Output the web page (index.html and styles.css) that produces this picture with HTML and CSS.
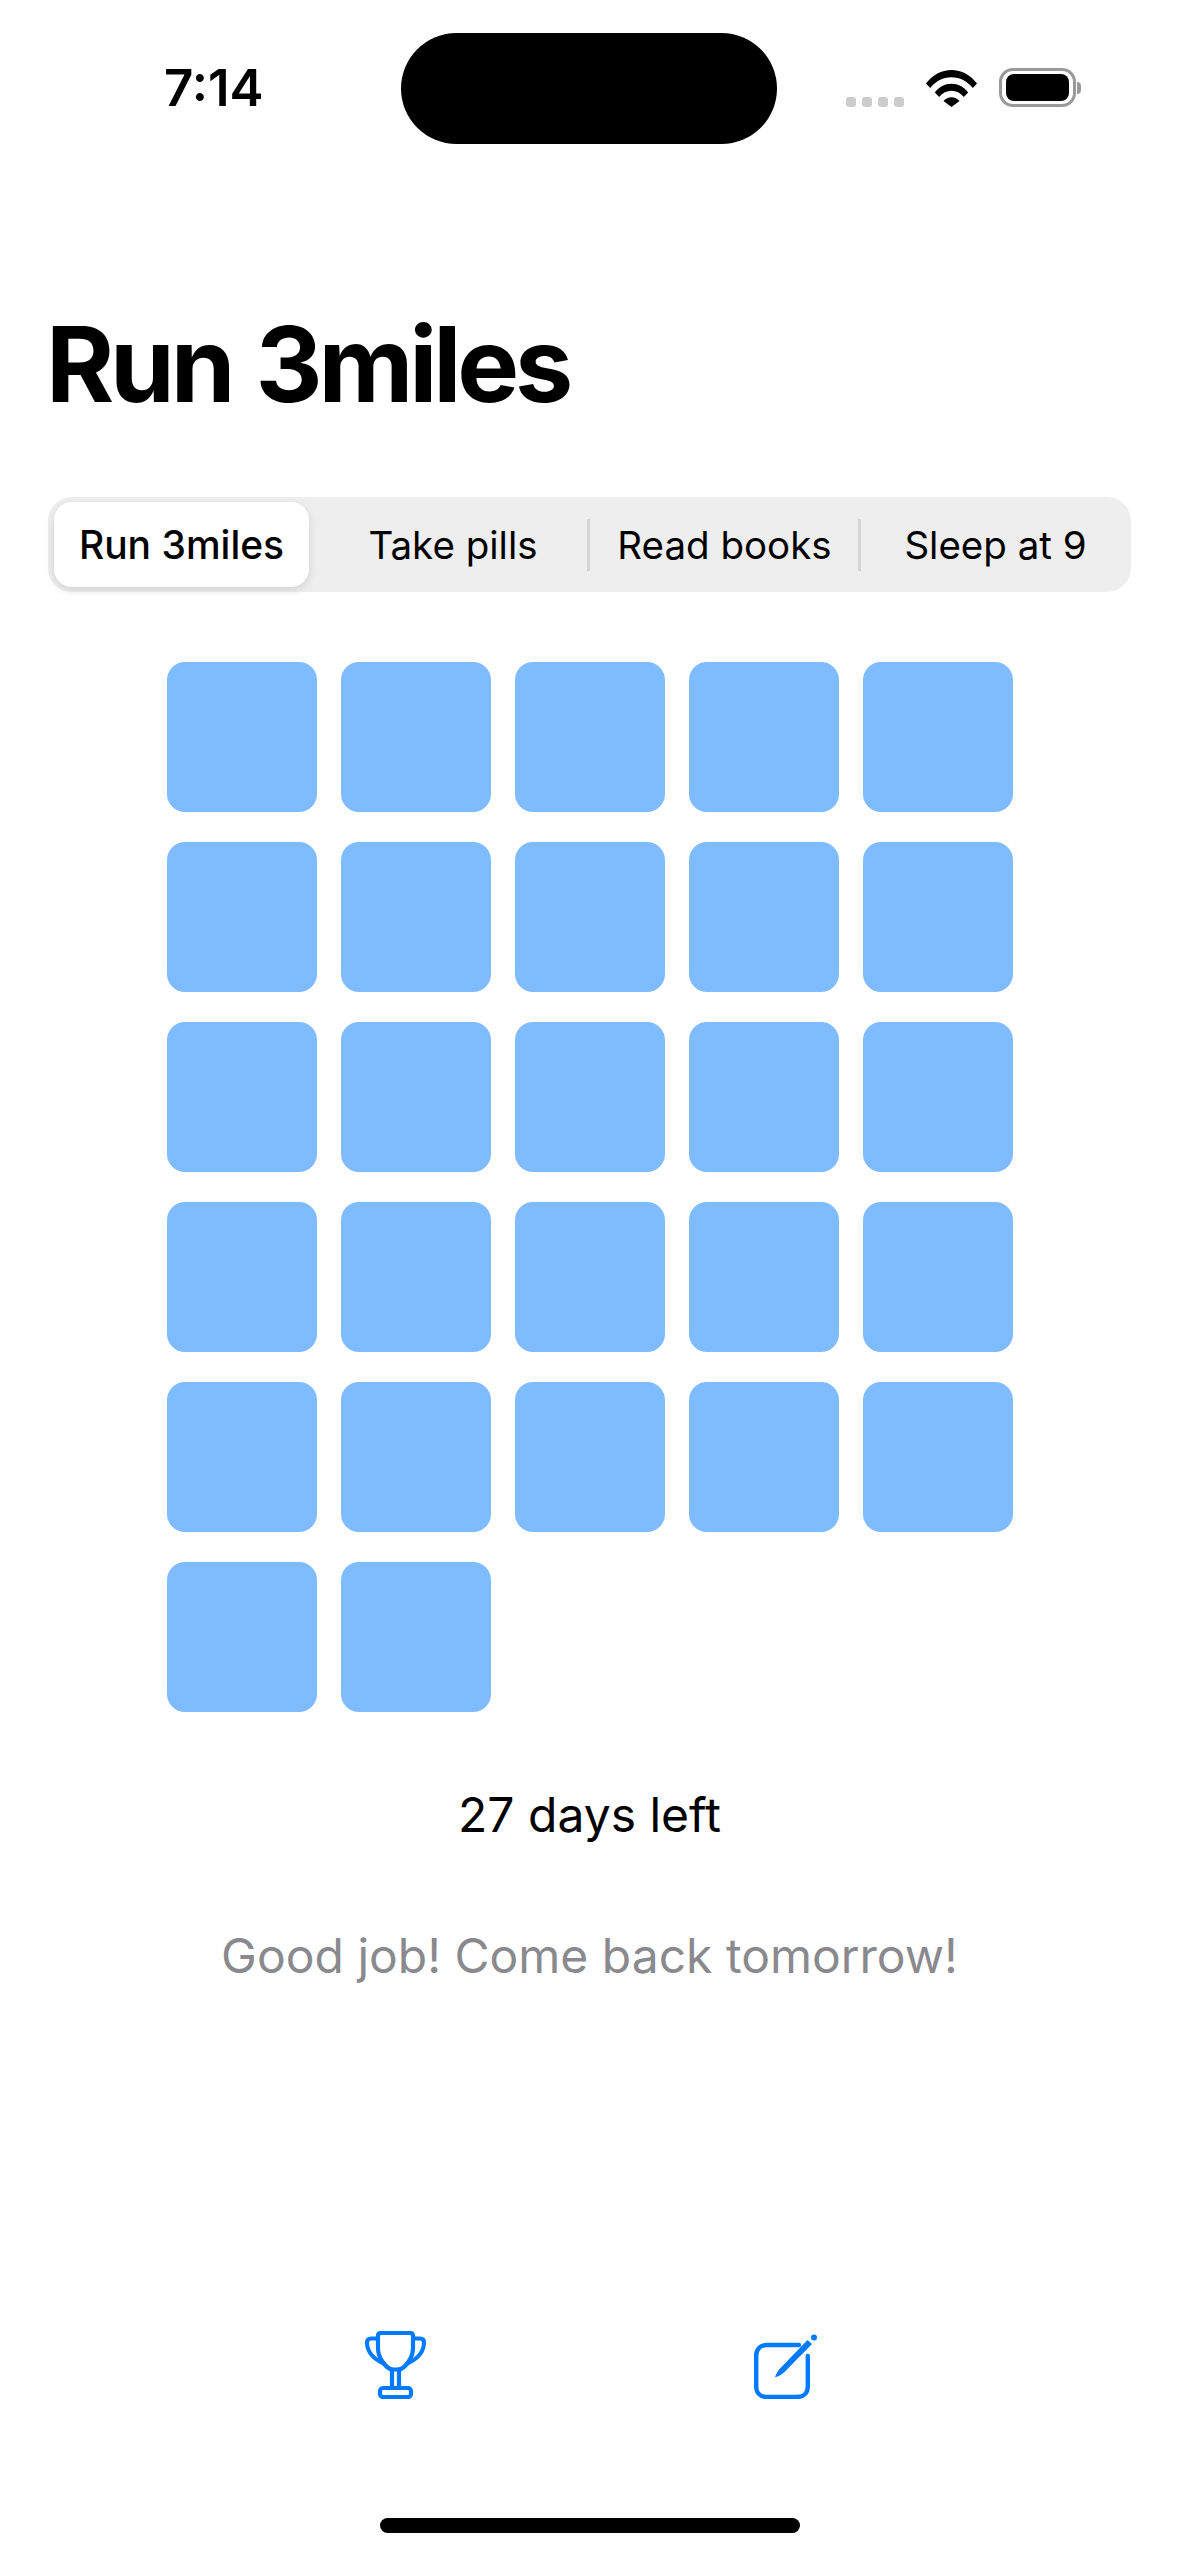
FILE: index.html
```html
<!DOCTYPE html>
<html>
<head>
<meta charset="utf-8">
<title>Run 3miles</title>
<link rel="stylesheet" href="styles.css">
</head>
<body>
<div class="screen">
  <div class="status">
    <span class="time">7:14</span>
    <div class="island"></div>
    <div class="status-icons">
      <div class="dots"><i></i><i></i><i></i><i></i></div>
      <svg class="wifi" width="51" height="37" viewBox="0 0 51 37">
        <path d="M0 13.500C6.500 5 15.500 0 25.500 0S44.500 5 51 13.500L46.800 18C41.200 11 33.800 7.200 25.500 7.200S9.800 11 4.200 18Z"/>
        <path d="M8.800 22.500C13 17 19 13.800 25.500 13.800S38 17 42.200 22.500L37.800 27C34.500 23 30.200 20.800 25.500 20.800S16.500 23 13.200 27Z"/>
        <path d="M17.500 31C19.500 28.500 22.400 27.200 25.500 27.200S31.500 28.500 33.500 31L25.500 37Z"/>
      </svg>
      <div class="battery"><div class="level"></div></div>
      <div class="nub"></div>
    </div>
  </div>

  <h1 class="title">Run 3miles</h1>

  <div class="seg">
    <div class="seg-item active w1">Run 3miles</div>
    <div class="seg-item w2">Take pills</div>
    <div class="seg-item line w3">Read books</div>
    <div class="seg-item line w4">Sleep at 9</div>
  </div>

  <div class="grid">
    <div class="day"></div><div class="day"></div><div class="day"></div><div class="day"></div><div class="day"></div>
    <div class="day"></div><div class="day"></div><div class="day"></div><div class="day"></div><div class="day"></div>
    <div class="day"></div><div class="day"></div><div class="day"></div><div class="day"></div><div class="day"></div>
    <div class="day"></div><div class="day"></div><div class="day"></div><div class="day"></div><div class="day"></div>
    <div class="day"></div><div class="day"></div><div class="day"></div><div class="day"></div><div class="day"></div>
    <div class="day"></div><div class="day"></div>
  </div>

  <p class="left">27 days left</p>
  <p class="msg">Good job! Come back tomorrow!</p>

  <div class="toolbar">
    <svg class="icon" width="63" height="68" viewBox="0 0 63 68" fill="none" stroke="#007aff" stroke-width="4.200" stroke-linejoin="round" stroke-linecap="round">
      <path d="M17 2H46C48 2 49 3 49 5V17C49 28 40 38.500 34 38.500H29C23 38.500 14 28 14 17V5C14 3 15 2 17 2Z"/>
      <path d="M14 7.500H7C4.500 7.500 3 9 3 11.500C3 20 9 28 20 32.500"/>
      <path d="M49 7.500H56C58.500 7.500 60 9 60 11.500C60 20 54 28 43 32.500"/>
      <path d="M28 38.500V57M35 38.500V57"/>
      <rect x="16" y="57" width="31" height="9" rx="3"/>
    </svg>
    <svg class="icon" width="64" height="65" viewBox="0 0 64 65" fill="none">
      <path d="M46 11H14C7.500 11 3.200 15 3.200 21.500V52.500C3.200 59 7.500 63 14 63H44C50.500 63 54.800 59 54.800 52.500V22" stroke="#007aff" stroke-width="4.400" stroke-linecap="round"/>
      <path d="M54.500 6L28 33.500C25 36.500 23 40 22 43.300C25.500 42.500 29 40.500 32 37.500L59 10Z" fill="#007aff"/>
      <circle cx="61" cy="3.500" r="3" fill="#007aff"/>
    </svg>
  </div>

  <div class="home"></div>
</div>
</body>
</html>
```

FILE: styles.css
```css
body {
  margin: 0;
  background: #fff;
  font-family: Inter, "Liberation Sans", sans-serif;
  color: #000;
}
.screen {
  width: 1179px;
  height: 2556px;
  overflow: hidden;
  display: flex;
  flex-direction: column;
}

/* status bar */
.status {
  height: 144px;
  padding-top: 33px;
  box-sizing: border-box;
  display: flex;
  align-items: flex-start;
}
.time {
  width: 401px;
  padding: 25px 0 0 164px;
  box-sizing: border-box;
  font-size: 51px;
  line-height: 60px;
  font-weight: 600;
}
.island {
  width: 376px;
  height: 111px;
  border-radius: 56px;
  background: #000;
}
.status-icons {
  margin-left: 69px;
  height: 40px;
  margin-top: 35px;
  display: flex;
  align-items: flex-end;
}
.dots {
  display: flex;
  gap: 6px;
  padding-bottom: 1px;
}
.dots i {
  width: 10px;
  height: 10px;
  border-radius: 3px;
  background: #ccc;
}
.wifi {
  margin-left: 22px;
  margin-bottom: 1px;
}
.battery {
  width: 77px;
  height: 39px;
  margin-left: 22px;
  margin-bottom: 1px;
  padding: 3px 4px;
  box-sizing: border-box;
  border: 3px solid #999;
  border-radius: 14px;
}
.level {
  height: 100%;
  border-radius: 8px;
  background: #000;
}
.nub {
  width: 4px;
  height: 12px;
  margin: 0 0 14px 1px;
  border-radius: 0 6px 6px 0;
  background: #999;
}

.title {
  margin: 0;
  padding: 152px 0 0 46px;
  height: 353px;
  box-sizing: border-box;
  font-size: 104px;
  line-height: 136px;
  font-weight: 700;
  letter-spacing: -4.200px;
  word-spacing: 4px;
}

/* segmented control */
.seg {
  margin: 0 48px;
  height: 95px;
  padding: 5px 6px;
  box-sizing: border-box;
  display: flex;
  background: #eee;
  border-radius: 24px;
}
.seg-item {
  position: relative;
  display: flex;
  align-items: center;
  justify-content: center;
  box-sizing: border-box;
  font-size: 38.500px;
  font-weight: 400;
}
.w1 { width: 255px; }
.w2 { width: 280px; padding-left: 8px; }
.w3 { width: 271px; }
.w4 { width: 265px; padding-left: 6px; }
.active {
  background: #fff;
  border-radius: 18px;
  font-size: 39px;
  font-weight: 450;
  box-shadow: 0 3px 10px rgba(0, 0, 0, 0.12);
}
.line::before {
  content: "";
  position: absolute;
  left: -2px;
  top: 17px;
  width: 3px;
  height: 52px;
  background: #d5d5d7;
}

.grid {
  margin: 70px 0 0 167px;
  display: grid;
  grid-template-columns: repeat(5, 150px);
  grid-auto-rows: 150px;
  column-gap: 24px;
  row-gap: 30px;
}
.day {
  background: #7fbbff;
  border-radius: 18px;
}

.left, .msg {
  margin: 0;
  text-align: center;
  font-size: 48px;
  line-height: 62px;
}
.left {
  margin-top: 72px;
}
.msg {
  margin-top: 79px;
  color: #8a8a8e;
}

.toolbar {
  margin-top: auto;
  padding-left: 364px;
  display: flex;
  gap: 326px;
  align-items: flex-end;
}
.icon {
  display: block;
}
.home {
  width: 420px;
  height: 15px;
  margin: 119px auto 23px;
  border-radius: 8px;
  background: #000;
}
```
